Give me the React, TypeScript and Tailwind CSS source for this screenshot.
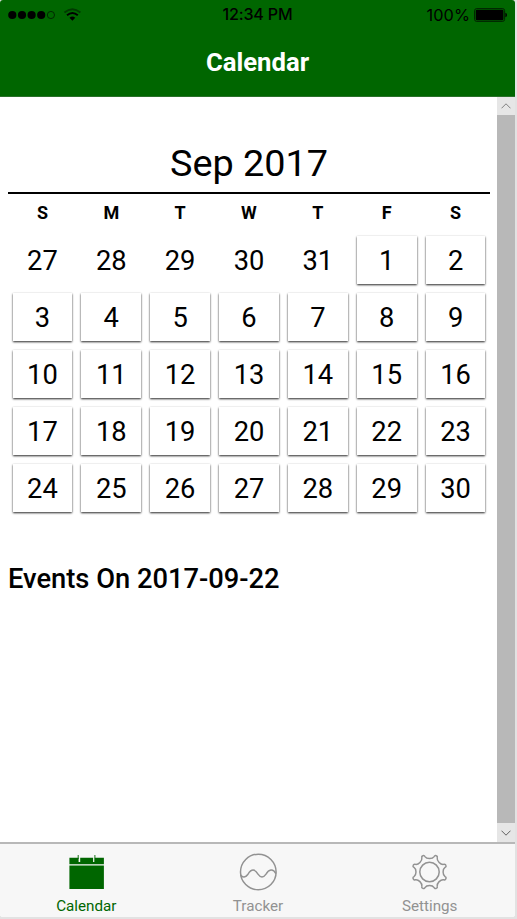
import React from 'react';

const weekdays = ['S', 'M', 'T', 'W', 'T', 'F', 'S'];
const leading = [27, 28, 29, 30, 31];
const days = Array.from({ length: 30 }, (_, i) => i + 1);

function gearPath(): string {
  const point = (deg: number, r: number) => {
    const a = (deg * Math.PI) / 180;
    return `${(18 + r * Math.cos(a)).toFixed(2)} ${(18 + r * Math.sin(a)).toFixed(2)}`;
  };
  let d = `M${point(16.5, 16.5)}`;
  for (let i = 0; i < 8; i++) {
    const c = 22.5 + i * 45;
    d += ` Q${point(c - 5, 18.2)} ${point(c, 18)} Q${point(c + 5, 18.2)} ${point(c + 6, 16.5)}`;
    d += ` C${point(c + 10, 13.5)} ${point(c + 35, 13.5)} ${point(c + 39, 16.5)}`;
  }
  return d + 'Z';
}

function StatusBar() {
  return (
    <div className="flex h-[30px] items-center text-black">
      <div className="flex flex-1 items-center pl-2">
        <svg width="76" height="16" viewBox="0 0 76 16">
          <circle cx="4.3" cy="8" r="4.1" />
          <circle cx="14" cy="8" r="4.1" />
          <circle cx="23.6" cy="8" r="4.1" />
          <circle cx="33.2" cy="8" r="4.1" />
          <circle cx="42.9" cy="8" r="3.6" fill="none" stroke="#002000" strokeWidth="0.9" />
          <g fill="none" strokeWidth="1.9">
            <path d="M56.4 5.6 Q64.4 -1 72.4 5.6" stroke="#003a00" />
            <path d="M59 8.3 Q64.4 3.6 69.8 8.3" stroke="#000" />
          </g>
          <path d="M61.5 10.8 Q64.4 8.3 67.3 10.8 L64.4 13.8Z" />
        </svg>
      </div>
      <span className="-mt-px text-[16.1px] font-medium leading-none tracking-[-0.2px] font-['Inter',sans-serif]">12:34 PM</span>
      <div className="flex flex-1 items-center justify-end pr-2">
        <span className="mr-1 text-[16.3px] leading-none tracking-[0.1px] font-['Inter',sans-serif]">100%</span>
        <svg width="33" height="14" viewBox="0 0 33 14">
          <rect x="0.6" y="0.6" width="30" height="12.8" rx="2" fill="none" stroke="#001c00" strokeWidth="0.9" />
          <rect x="1.8" y="1.8" width="27.6" height="10.4" rx="1" />
          <path d="M31.4 4.7 Q33 5.2 33 7 Q33 8.8 31.4 9.3Z" />
        </svg>
      </div>
    </div>
  );
}

function Scrollbar() {
  return (
    <div className="flex w-[18px] shrink-0 flex-col bg-[#e6e6e6]">
      <div className="flex h-[18px] items-center justify-center">
        <svg width="10" height="6" viewBox="0 0 10 6" fill="none" stroke="#808080"><path d="M.5 5.3 5 .8 9.5 5.3" /></svg>
      </div>
      <div className="flex-1 bg-[#b8b8b8]" />
      <div className="flex h-[19px] items-center justify-center">
        <svg width="10" height="6" viewBox="0 0 10 6" fill="none" stroke="#606060"><path d="M.5 .7 5 5.2 9.5 .7" /></svg>
      </div>
    </div>
  );
}

function Tab({ label, color, children }: { label: string; color: string; children: React.ReactNode }) {
  return (
    <div className={`flex flex-1 flex-col items-center pt-2 ${color}`}>
      <svg width="40" height="40" viewBox="-2 -2 40 40" fill="none" stroke="currentColor" strokeWidth="1.5">{children}</svg>
      <span className="mt-1 pl-px text-[15.2px] leading-[20px]">{label}</span>
    </div>
  );
}

export default function App() {
  return (
    <div className="h-[919px] w-[517px] bg-[#e2e2e2] font-['Roboto',sans-serif] text-black">
      <div className="flex h-[917px] w-[515px] flex-col overflow-hidden rounded-[3px] bg-white">
        <header className="h-[97px] shrink-0 border-b border-[#2a702a] bg-[#006600]">
          <StatusBar />
          <h1 className="pt-[17px] text-center text-[25.7px] font-bold leading-[30px] text-white">Calendar</h1>
        </header>
        <div className="flex min-h-0 flex-1">
          <main className="flex-1 pl-2 pr-[7px] pt-[39px]">
            <h2 className="h-[58px] border-b-2 border-black text-center text-[37.8px] leading-[55px]">Sep 2017</h2>
            <div className="grid h-[38px] grid-cols-7 text-center text-[18px] font-bold leading-[38px]">
              {weekdays.map((d, i) => <span key={i}>{d}</span>)}
            </div>
            <div className="grid auto-rows-[57.1px] grid-cols-7 text-center text-[27.3px]">
              {leading.map((d) => <div key={`p${d}`} className="px-1 py-1 leading-[51px]">{d}</div>)}
              {days.map((d) => (
                <div key={d} className="pl-[4.5px] pr-[4.5px] pt-1">
                  <div className="h-12 leading-[51px] shadow-[0_1px_2px_rgba(0,0,0,0.85)]">{d}</div>
                </div>
              ))}
            </div>
            <h3 className="pt-[46px] text-[27.3px] font-medium leading-[32px]">Events On 2017-09-22</h3>
          </main>
          <Scrollbar />
        </div>
        <nav className="flex h-[75px] shrink-0 border-t-2 border-[#b8b8b8] bg-[#f7f7f7]">
          <Tab label="Calendar" color="text-[#006600]">
            <g fill="currentColor" stroke="none">
              <path d="M1.4 3.8H35.9V10.2H1.4zM1.4 11.6H35.9V35H1.4z" />
            </g>
            <path d="M11.4 1V8M25.9 1V8" stroke="#f7f7f7" strokeWidth="1.6" />
            <path d="M10.2 1V5M26.9 1V8" strokeWidth="0.9" />
          </Tab>
          <Tab label="Tracker" color="text-[#929292]">
            <circle cx="18.3" cy="18" r="17.8" />
            <path d="M.6 20.8C2.4 24 5.6 23.6 8 20.2C11.4 14.7 15 14.7 18 20.2C20.6 24 23.4 24 26 20.2C28.8 15.3 33 14.2 35.9 19.6" />
          </Tab>
          <Tab label="Settings" color="text-[#929292]">
            <circle cx="18.5" cy="18" r="9.7" />
            <path d={gearPath()} transform="translate(.9 .4) scale(.98)" strokeLinejoin="round" />
          </Tab>
        </nav>
      </div>
    </div>
  );
}
